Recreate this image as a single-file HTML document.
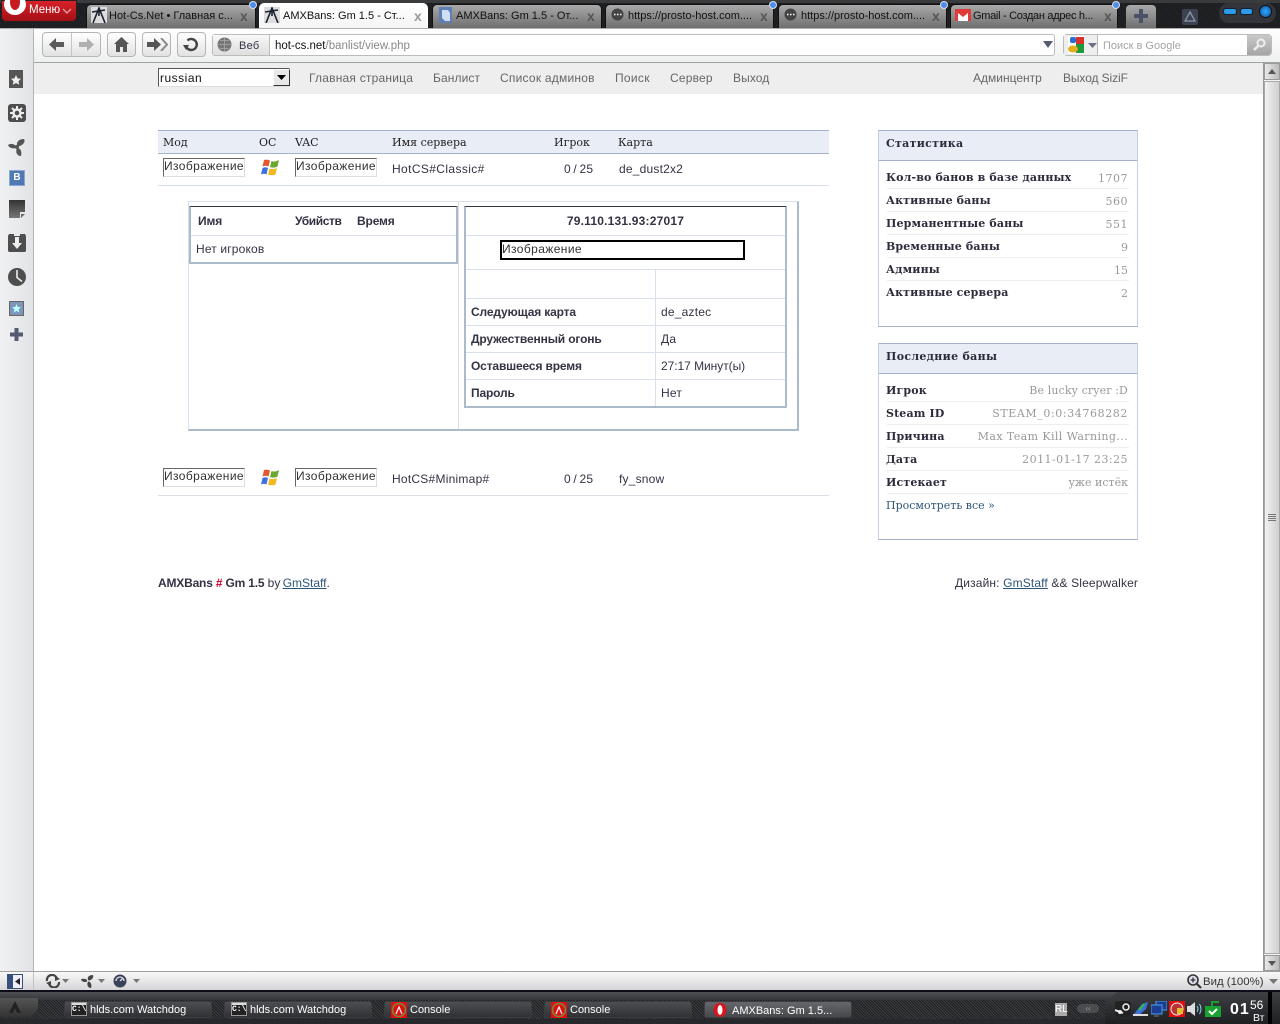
<!DOCTYPE html>
<html><head><meta charset="utf-8"><title>AMXBans</title>
<style>
*{box-sizing:border-box}
html,body{margin:0;padding:0;width:1280px;height:1024px;overflow:hidden;background:#fff}
body{position:relative;font:12px "Liberation Sans","Noto Sans CJK SC",sans-serif;color:#333344}
.a,.t,svg.i{position:absolute}
.t{white-space:nowrap;line-height:14px}
.l{letter-spacing:.2px}
.g{color:#666}
.b{font-weight:bold;letter-spacing:-.15px}
.s{font-family:"DejaVu Serif","Liberation Serif",serif;font-size:11px}
.sb{font-family:"DejaVu Serif","Liberation Serif",serif;font-size:11px;font-weight:bold;color:#2c2c3c;letter-spacing:.14px}
.v{font-family:"DejaVu Serif","Liberation Serif",serif;font-size:11px;color:#999;text-align:right;right:152px}
.tab{position:absolute;top:4px;height:24px;border-radius:5px 5px 0 0;background:linear-gradient(#a9a9a9,#6f6f6f);border:1px solid #111;border-bottom:0}
.tt{position:absolute;top:9px;white-space:nowrap;line-height:14px;font-size:11px;color:#111}
.x{position:absolute;top:9px;font:bold 14px/14px "Liberation Sans",sans-serif;color:#555}
.dot{position:absolute;top:1px;width:8px;height:8px;border-radius:50%;background:#4b8fe8;border:1px solid #dde}
.ph{position:absolute;width:82px;height:19px;background:#fff;border:1px solid;border-color:#666 #ddd #ddd #666;line-height:15px;padding-left:0;letter-spacing:.4px;color:#333}
.btn{position:absolute;top:32px;height:25px;border:1px solid #b5b5b5;border-radius:4px;background:linear-gradient(#fff,#e2e2e2)}
.ln{position:absolute;background:#d9dfec}
.tb{position:absolute;top:1001px;width:148px;height:17px;background:linear-gradient(#4c4e52,#2f3135);border-radius:3px;border:1px solid #3a3c40}
.tbt{position:absolute;top:1003px;white-space:nowrap;color:#fff;font-size:11px;line-height:14px}
</style></head><body>

<!-- top bar -->
<div class="a" style="left:0;top:0;width:1280px;height:28px;background:repeating-linear-gradient(45deg,#17181a 0 1px,#26272a 1px 2px)"></div>
<div class="a" style="left:0;top:0;width:1280px;height:3px;background:#3a3b3d"></div>
<div class="a" style="left:1px;top:0;width:76px;height:22px;background:linear-gradient(#d8222a,#a30f16);border:1px solid #222;border-radius:0 0 5px 5px"></div>
<div class="a" style="left:4px;top:-6px;width:22px;height:21px;border-radius:50%;background:#fff;"></div>
<div class="a" style="left:10px;top:-6px;width:10px;height:16px;border-radius:50%;background:#c81a22"></div>
<div class="t" style="left:29px;top:3px;color:#fff;font-size:11.5px">Меню</div>
<svg class="i" style="left:62px;top:8px" width="10" height="6"><path d="M1 1L5 5L9 1" fill="none" stroke="#e8a0a0" stroke-width="1.3"/></svg>

<div class="tab" style="left:86px;width:170px"></div>
<div class="tab" style="left:259px;width:169px;top:3px;height:26px;background:linear-gradient(#fff,#f4f4f4);border-color:#fff"></div>
<div class="tab" style="left:432px;width:170px"></div>
<div class="tab" style="left:605px;width:169px"></div>
<div class="tab" style="left:778px;width:169px"></div>
<div class="tab" style="left:950px;width:168px"></div>
<div class="tab" style="left:1125px;width:32px;border-color:#222"></div>

<svg class="i" style="left:91px;top:7px" width="16" height="16"><rect width="16" height="16" fill="#ddd"/><path d="M2 16L8 1L14 16M8 1L8 9M1 5L14 3" fill="none" stroke="#1a2230" stroke-width="1.6"/></svg>
<svg class="i" style="left:264px;top:7px" width="16" height="16"><rect width="16" height="16" fill="#ddd"/><path d="M2 16L8 1L14 16M8 1L8 9M1 5L14 3" fill="none" stroke="#1a2230" stroke-width="1.6"/></svg>
<svg class="i" style="left:438px;top:7px" width="16" height="16"><rect x="1" width="13" height="16" fill="#5d7fb5"/><path d="M4 3h6l2 3v8H7L4 11z" fill="#cfe0f5"/></svg>
<svg class="i" style="left:611px;top:8px" width="13" height="13"><circle cx="6.5" cy="6.5" r="6" fill="#444"/><path d="M3 6.5h1.5M6 6.5h1.5M9 6.5h1.5" stroke="#fff" stroke-width="1.5"/></svg>
<svg class="i" style="left:784px;top:8px" width="13" height="13"><circle cx="6.5" cy="6.5" r="6" fill="#444"/><path d="M3 6.5h1.5M6 6.5h1.5M9 6.5h1.5" stroke="#fff" stroke-width="1.5"/></svg>
<svg class="i" style="left:955px;top:9px" width="16" height="12"><rect width="16" height="12" fill="#fff"/><path d="M0 0h16v12h-3V4L8 8 3 4v8H0z" fill="#e03a3a"/></svg>

<div class="tt" style="left:109px">Hot-Cs.Net • Главная с...</div>
<div class="tt" style="left:283px;top:9px">AMXBans: Gm 1.5 - Ст...</div>
<div class="tt" style="left:456px">AMXBans: Gm 1.5 - От...</div>
<div class="tt" style="left:628px">https://prosto-host.com....</div>
<div class="tt" style="left:801px">https://prosto-host.com....</div>
<div class="tt" style="left:973px;letter-spacing:-.3px">Gmail - Создан адрес h...</div>
<div class="x" style="left:240px">x</div><div class="x" style="left:414px;color:#999">x</div><div class="x" style="left:587px">x</div><div class="x" style="left:760px">x</div><div class="x" style="left:932px">x</div><div class="x" style="left:1104px">x</div>
<div class="dot" style="left:249px"></div><div class="dot" style="left:769px"></div><div class="dot" style="left:940px"></div><div class="dot" style="left:1112px"></div>
<svg class="i" style="left:1134px;top:9px" width="14" height="14"><path d="M5 0h4v5h5v4H9v5H5V9H0V5h5z" fill="#4a5268"/></svg>
<div class="a" style="left:1182px;top:9px;width:16px;height:16px;background:#3c4250;border-radius:2px"></div>
<svg class="i" style="left:1184px;top:11px" width="12" height="12"><path d="M6 1L11 10H1z" fill="none" stroke="#8b95aa" stroke-width="1.3"/></svg>
<div class="a" style="left:1219px;top:3px;width:57px;height:20px;background:#33353a;border-radius:10px"></div>
<div class="a" style="left:1223px;top:8px;width:14px;height:7px;background:#2d9be8;border-radius:3px;border:1px solid #123"></div>
<div class="a" style="left:1240px;top:8px;width:13px;height:7px;background:#2d9be8;border-radius:3px;border:1px solid #123"></div>
<div class="a" style="left:1259px;top:5px;width:13px;height:13px;background:radial-gradient(circle,#2fa8ff,#0a4f9a);border-radius:50%;border:1px solid #111"></div>

<!-- left panel -->
<div class="a" style="left:0;top:28px;width:33px;height:944px;background:linear-gradient(90deg,#f0f1f3,#e2e3e6)"></div>
<div class="a" style="left:33px;top:28px;width:1px;height:944px;background:#b4b4b4"></div>

<!-- toolbar -->
<div class="a" style="left:34px;top:28px;width:1246px;height:34px;background:linear-gradient(#fff,#eef0f0)"></div>
<div class="a" style="left:34px;top:62px;width:1246px;height:1px;background:#a2a2a2"></div>
<div class="a" style="left:0;top:28px;width:1280px;height:1px;background:#b0b0b0"></div>

<div class="btn" style="left:42px;width:59px"></div><div class="a" style="left:71px;top:33px;width:1px;height:23px;background:#c5c5c5"></div>
<svg class="i" style="left:49px;top:38px" width="15" height="13"><path d="M7 0V4H15V9H7V13L0 6.5z" fill="#5a5a5a"/></svg>
<svg class="i" style="left:79px;top:38px" width="15" height="13"><path d="M8 0V4H0V9H8V13L15 6.5z" fill="#b0b0b0"/></svg>
<div class="btn" style="left:107px;width:29px"></div>
<svg class="i" style="left:114px;top:37px" width="15" height="15"><path d="M7.5 0L15 7H13V15H9V10H6V15H2V7H0z" fill="#555"/></svg>
<div class="btn" style="left:142px;width:29px"></div>
<svg class="i" style="left:147px;top:38px" width="21" height="13"><path d="M7 0V4H0V9H7V13L14 6.5z" fill="#555"/><path d="M14 0L20 6.5L14 13" fill="none" stroke="#888" stroke-width="2"/></svg>
<div class="btn" style="left:177px;width:29px"></div>
<svg class="i" style="left:183px;top:37px" width="16" height="15"><path d="M3 9A5.5 5.5 0 1 0 4.5 3.5" fill="none" stroke="#444" stroke-width="2.4"/><path d="M0 8h6l-3 5z" fill="#444"/></svg>

<div class="a" style="left:212px;top:34px;width:843px;height:22px;background:#fff;border:1px solid #bcbcbc;border-radius:3px"></div>
<div class="a" style="left:213px;top:35px;width:57px;height:20px;background:linear-gradient(#f8f8f8,#dedede);border-right:1px solid #bbb"></div>
<svg class="i" style="left:217px;top:37px" width="16" height="15"><circle cx="7.5" cy="7.5" r="7" fill="#777"/><path d="M1 7.5h13M7.5 1v13M3 3.5h9M3 11.5h9" stroke="#aaa" stroke-width=".8"/></svg>
<div class="t" style="left:239px;top:39px;font-size:11px;letter-spacing:.3px">Веб</div>
<div class="t" style="left:275px;top:39px;font-size:11.5px;color:#111">hot-cs.net<span style="color:#888">/banlist/view.php</span></div>
<svg class="i" style="left:1043px;top:41px" width="10" height="7"><path d="M0 0H10L5 7z" fill="#555c72"/></svg>

<div class="a" style="left:1063px;top:34px;width:209px;height:22px;background:#fff;border:1px solid #bcbcbc;border-radius:4px"></div>
<div class="a" style="left:1064px;top:35px;width:34px;height:20px;background:#eee;border-right:1px solid #bbb"></div>
<svg class="i" style="left:1068px;top:36px" width="16" height="18"><rect width="16" height="18" fill="#fff"/><rect x="2" y="1" width="6" height="6" rx="2" fill="#2a6dd8"/><rect x="8" y="1" width="8" height="8" fill="#d8322a"/><rect x="8" y="8" width="8" height="9" fill="#1f9a3a"/><ellipse cx="5" cy="13" rx="5" ry="3.5" fill="#e5ae1c"/></svg>
<svg class="i" style="left:1088px;top:43px" width="9" height="5"><path d="M0 0H9L4.5 5z" fill="#6a7186"/></svg>
<div class="t" style="left:1103px;top:39px;font-size:11px;color:#a5a5a5">Поиск в Google</div>
<div class="a" style="left:1247px;top:35px;width:24px;height:20px;background:linear-gradient(#c8c8c8,#a5a5a5);border-radius:0 3px 3px 0"></div>
<svg class="i" style="left:1253px;top:38px" width="13" height="14"><circle cx="8" cy="5" r="3.5" fill="none" stroke="#eee" stroke-width="2"/><path d="M5 8L1 12" stroke="#eee" stroke-width="2.4"/></svg>

<!-- sidebar icons -->
<svg class="i" style="left:9px;top:70px" width="15" height="18"><rect width="14" height="18" fill="#555"/><path d="M7 5l1.6 3.4 3.4.4-2.5 2.4.7 3.5L7 13l-3.2 1.7.7-3.5L2 8.8l3.4-.4z" fill="#eee"/></svg>
<svg class="i" style="left:8px;top:104px" width="18" height="18"><rect width="18" height="18" rx="3" fill="#4e4e4e"/><circle cx="9" cy="9" r="3.5" fill="none" stroke="#eee" stroke-width="2.4"/><path d="M9 2v3M9 13v3M2 9h3M13 9h3M4 4l2 2M12 12l2 2M14 4l-2 2M4 14l2-2" stroke="#eee" stroke-width="2"/></svg>
<svg class="i" style="left:8px;top:138px" width="18" height="18"><path d="M9 8C8 4 11 1 16 1C18 4 14 8 10 8.500Z" fill="#555"/><path d="M8 8C6 6 3 5 0 7C1 10 5 11 8 10Z" fill="#555"/><path d="M10 10C13 11 14 14 13 18C9 18 7 14 9 10Z" fill="#555"/><circle cx="9" cy="9" r="2" fill="#555"/></svg>
<div class="a" style="left:9px;top:170px;width:16px;height:16px;background:#4f79b5;border:1px solid #8aa7cf;color:#fff;font:bold 10px/14px 'Liberation Sans',sans-serif;text-align:center">В</div>
<svg class="i" style="left:9px;top:200px" width="16" height="18"><defs><linearGradient id="n" x1="0" y1="0" x2="0" y2="1"><stop offset="0" stop-color="#333"/><stop offset="1" stop-color="#777"/></linearGradient></defs><path d="M0 0H16V12L11 12V18H0Z" fill="url(#n)"/><path d="M12 14H16L12 18Z" fill="#666"/></svg>
<svg class="i" style="left:8px;top:234px" width="18" height="18"><path d="M1 0H6V2H12V0H17L18 2V17L17 18H1L0 17V2Z" fill="#4e4e4e"/><path d="M7 3H11V9H14L9 15L4 9H7Z" fill="#eee"/></svg>
<svg class="i" style="left:8px;top:268px" width="18" height="18"><circle cx="9" cy="9" r="9" fill="#4e4e4e"/><path d="M9 2V9.5L14 13.5" fill="none" stroke="#eee" stroke-width="1.6"/></svg>
<svg class="i" style="left:9px;top:301px" width="16" height="16"><rect x=".5" y=".5" width="14" height="14" fill="#7d95b8" stroke="#666"/><path d="M7.5 3l1.3 3 3.2.3-2.4 2.1.7 3.1-2.8-1.6-2.8 1.6.7-3.1-2.4-2.1 3.2-.3z" fill="#bff"/></svg>
<svg class="i" style="left:10px;top:328px" width="13" height="13"><path d="M4.5 0h4v4.500H13v4H8.500V13h-4V8.500H0v-4h4.500z" fill="#555a70"/></svg>

<!-- page nav -->
<div class="a" style="left:34px;top:63px;width:1229px;height:31px;background:#eee"></div>
<div class="a" style="left:158px;top:68px;width:132px;height:19px;background:#fff;border:1px solid;border-color:#555 #ddd #ddd #555"></div>
<div class="a" style="left:273px;top:69px;width:17px;height:17px;background:#e8e8e8;border:1px solid;border-color:#fff #333 #333 #fff"></div>
<svg class="i" style="left:277px;top:75px" width="9" height="5"><path d="M0 0H9L4.500 5z" fill="#000"/></svg>
<div class="t" style="left:160px;top:71px;color:#111;letter-spacing:.5px">russian</div>
<div class="t g" style="left:309px;top:71px;letter-spacing:.21px">Главная страница</div>
<div class="t g" style="left:433px;top:71px;letter-spacing:.1px">Банлист</div>
<div class="t g" style="left:500px;top:71px;letter-spacing:.23px">Список админов</div>
<div class="t g" style="left:615px;top:71px;letter-spacing:.3px">Поиск</div>
<div class="t g" style="left:670px;top:71px;letter-spacing:.2px">Сервер</div>
<div class="t g" style="left:733px;top:71px;letter-spacing:.1px">Выход</div>
<div class="t g" style="left:973px;top:71px">Админцентр</div>
<div class="t g" style="left:1063px;top:71px;letter-spacing:-.1px">Выход SiziF</div>

<!-- main table -->
<div class="a" style="left:158px;top:130px;width:671px;height:24px;background:#e9edf5;border-top:1px solid #a3b1cf;border-bottom:1px solid #a3b1cf"></div>
<div class="t s" style="left:163px;top:136px;color:#222">Мод</div>
<div class="t s" style="left:259px;top:136px;color:#222">ОС</div>
<div class="t s" style="left:295px;top:136px;color:#222">VAC</div>
<div class="t s" style="left:392px;top:136px;color:#222">Имя сервера</div>
<div class="t s" style="left:554px;top:136px;color:#222">Игрок</div>
<div class="t s" style="left:618px;top:136px;color:#222">Карта</div>

<div class="ph" style="left:163px;top:158px">Изображение</div>
<svg class="i" style="left:261px;top:159px" width="18" height="17"><path d="M3 1Q6 0 9 1.500L7.500 7.500Q4.500 6 1.500 7.500z" fill="#e2582a"/><path d="M10.500 2Q14 3.500 18 1L16.500 7.500Q13 9.500 9 8z" fill="#6aa82f"/><path d="M1.500 9Q4.500 7.500 7 9L5.500 15.500Q3 14 0 15.500z" fill="#3d6fe0"/><path d="M8.500 9.500Q12 11 16 9L14.500 15.500Q11 17 7 15.500z" fill="#f1b81f"/></svg>
<div class="ph" style="left:295px;top:158px">Изображение</div>
<div class="t" style="left:392px;top:162px;letter-spacing:.38px">HotCS#Classic#</div>
<div class="t" style="left:564px;top:162px;word-spacing:-1px;letter-spacing:.2px">0 / 25</div>
<div class="t l" style="left:619px;top:162px">de_dust2x2</div>
<div class="ln" style="left:158px;top:185px;width:671px;height:1px"></div>

<!-- detail box -->
<div class="a" style="left:188px;top:201px;width:611px;height:230px;border:1px solid #d9dfec;border-right:2px solid #aabbcc;border-bottom:2px solid #aabbcc"></div>
<div class="ln" style="left:458px;top:202px;width:1px;height:227px"></div>

<div class="a" style="left:189px;top:206px;width:269px;height:58px;border:2px solid #aabbcc;border-top:1px solid #333344"></div>
<div class="ln" style="left:191px;top:235px;width:265px;height:1px"></div>
<div class="t b" style="left:198px;top:214px">Имя</div>
<div class="t b" style="left:295px;top:214px;letter-spacing:-.4px">Убийств</div>
<div class="t b" style="left:357px;top:214px">Время</div>
<div class="t" style="left:196px;top:242px;letter-spacing:.16px">Нет игроков</div>

<div class="a" style="left:464px;top:206px;width:323px;height:202px;border:2px solid #aabbcc;border-top:1px solid #333344"></div>
<div class="ln" style="left:466px;top:235px;width:319px;height:1px"></div>
<div class="ln" style="left:466px;top:269px;width:319px;height:1px"></div>
<div class="ln" style="left:466px;top:298px;width:319px;height:1px"></div>
<div class="ln" style="left:466px;top:325px;width:319px;height:1px"></div>
<div class="ln" style="left:466px;top:352px;width:319px;height:1px"></div>
<div class="ln" style="left:466px;top:379px;width:319px;height:1px"></div>
<div class="ln" style="left:655px;top:269px;width:1px;height:137px"></div>
<div class="t b" style="left:466px;top:214px;width:319px;text-align:center;letter-spacing:.2px">79.110.131.93:27017</div>
<div class="a" style="left:500px;top:240px;width:245px;height:20px;border:2px solid #000;background:#fff;line-height:14px;padding-left:0;letter-spacing:.4px;color:#333">Изображение</div>
<div class="t b" style="left:471px;top:305px">Следующая карта</div>
<div class="t l" style="left:661px;top:305px">de_aztec</div>
<div class="t b" style="left:471px;top:332px">Дружественный огонь</div>
<div class="t l" style="left:661px;top:332px">Да</div>
<div class="t b" style="left:471px;top:359px">Оставшееся время</div>
<div class="t" style="left:661px;top:359px;letter-spacing:-.05px">27:17 Минут(ы)</div>
<div class="t b" style="left:471px;top:386px">Пароль</div>
<div class="t l" style="left:661px;top:386px">Нет</div>

<!-- row 2 -->
<div class="ph" style="left:163px;top:468px">Изображение</div>
<svg class="i" style="left:261px;top:469px" width="18" height="17"><path d="M3 1Q6 0 9 1.500L7.500 7.500Q4.500 6 1.500 7.500z" fill="#e2582a"/><path d="M10.500 2Q14 3.500 18 1L16.500 7.500Q13 9.500 9 8z" fill="#6aa82f"/><path d="M1.500 9Q4.500 7.500 7 9L5.500 15.500Q3 14 0 15.500z" fill="#3d6fe0"/><path d="M8.500 9.500Q12 11 16 9L14.500 15.500Q11 17 7 15.500z" fill="#f1b81f"/></svg>
<div class="ph" style="left:295px;top:468px">Изображение</div>
<div class="t" style="left:392px;top:472px;letter-spacing:.24px">HotCS#Minimap#</div>
<div class="t" style="left:564px;top:472px;word-spacing:-1px;letter-spacing:.2px">0 / 25</div>
<div class="t l" style="left:619px;top:472px">fy_snow</div>
<div class="a" style="left:158px;top:495px;width:671px;height:1px;background:#dcdee6"></div>

<!-- stats -->
<div class="a" style="left:878px;top:130px;width:260px;height:197px;border:1px solid #c4cfe3;border-top:1px solid #a3b1cf;border-bottom:1px solid #a3b1cf"></div>
<div class="a" style="left:879px;top:131px;width:258px;height:30px;background:#e9edf5;border-bottom:1px solid #a3b1cf"></div>
<div class="t sb" style="left:886px;top:137px;letter-spacing:.3px">Статистика</div>
<div class="t sb" style="left:886px;top:171px">Кол-во банов в базе данных</div><div class="t v" style="top:172px;letter-spacing:.5px">1707</div>
<div class="t sb" style="left:886px;top:194px">Активные баны</div><div class="t v" style="top:195px;letter-spacing:.5px">560</div>
<div class="t sb" style="left:886px;top:217px">Перманентные баны</div><div class="t v" style="top:218px;letter-spacing:.5px">551</div>
<div class="t sb" style="left:886px;top:240px">Временные баны</div><div class="t v" style="top:241px">9</div>
<div class="t sb" style="left:886px;top:263px">Админы</div><div class="t v" style="top:264px">15</div>
<div class="t sb" style="left:886px;top:286px">Активные сервера</div><div class="t v" style="top:287px">2</div>
<div class="a" style="left:887px;top:188px;width:242px;height:1px;background:#eee"></div>
<div class="a" style="left:887px;top:211px;width:242px;height:1px;background:#eee"></div>
<div class="a" style="left:887px;top:234px;width:242px;height:1px;background:#eee"></div>
<div class="a" style="left:887px;top:257px;width:242px;height:1px;background:#eee"></div>
<div class="a" style="left:887px;top:280px;width:242px;height:1px;background:#eee"></div>

<!-- last bans -->
<div class="a" style="left:878px;top:343px;width:260px;height:197px;border:1px solid #c4cfe3;border-top:1px solid #a3b1cf;border-bottom:1px solid #a3b1cf"></div>
<div class="a" style="left:879px;top:344px;width:258px;height:30px;background:#e9edf5;border-bottom:1px solid #a3b1cf"></div>
<div class="t sb" style="left:886px;top:350px;letter-spacing:.3px">Последние баны</div>
<div class="t sb" style="left:886px;top:384px">Игрок</div><div class="t v" style="top:384px;letter-spacing:.12px">Be lucky cryer :D</div>
<div class="t sb" style="left:886px;top:407px">Steam ID</div><div class="t v" style="top:407px;letter-spacing:.6px">STEAM_0:0:34768282</div>
<div class="t sb" style="left:886px;top:430px">Причина</div><div class="t v" style="top:430px;letter-spacing:.4px">Max Team Kill Warning...</div>
<div class="t sb" style="left:886px;top:453px">Дата</div><div class="t v" style="top:453px;letter-spacing:.45px">2011-01-17 23:25</div>
<div class="t sb" style="left:886px;top:476px">Истекает</div><div class="t v" style="top:476px">уже истёк</div>
<div class="t s" style="left:886px;top:499px;color:#2e5478">Просмотреть все »</div>
<div class="a" style="left:887px;top:401px;width:242px;height:1px;background:#eee"></div>
<div class="a" style="left:887px;top:424px;width:242px;height:1px;background:#eee"></div>
<div class="a" style="left:887px;top:447px;width:242px;height:1px;background:#eee"></div>
<div class="a" style="left:887px;top:470px;width:242px;height:1px;background:#eee"></div>
<div class="a" style="left:887px;top:493px;width:242px;height:1px;background:#eee"></div>

<!-- footer -->
<div class="t" style="left:158px;top:576px"><span class="b" style="letter-spacing:-.19px">AMXBans <span style="color:#d00030">#</span> Gm 1.5</span> by <span style="color:#2e5478;text-decoration:underline;margin-left:-1px">GmStaff</span>.</div>
<div class="t" style="left:955px;top:576px;letter-spacing:.14px">Дизайн: <span style="color:#2e5478;text-decoration:underline">GmStaff</span> &amp;&amp; Sleepwalker</div>

<!-- scrollbar -->
<div class="a" style="left:1263px;top:63px;width:17px;height:908px;background:#f2f2f2;border-left:1px solid #999"></div>
<div class="a" style="left:1264px;top:63px;width:16px;height:17px;background:linear-gradient(90deg,#e8e8e8,#bbb);border:1px solid #999"></div>
<div class="a" style="left:1264px;top:81px;width:16px;height:873px;background:linear-gradient(90deg,#f2f2f2,#cfcfcf);border:1px solid #a8a8a8"></div>
<div class="a" style="left:1268px;top:514px;width:8px;height:7px;background:repeating-linear-gradient(#777 0 1px,transparent 1px 2px)"></div>
<div class="a" style="left:1264px;top:955px;width:16px;height:16px;background:linear-gradient(90deg,#e8e8e8,#bbb);border:1px solid #999"></div>
<svg class="i" style="left:1268px;top:69px" width="8" height="5"><path d="M0 5L4 0L8 5z" fill="#555"/></svg>
<svg class="i" style="left:1268px;top:961px" width="8" height="5"><path d="M0 0L4 5L8 0z" fill="#555"/></svg>

<!-- status bar -->
<div class="a" style="left:0;top:971px;width:1280px;height:1px;background:#a0a0a0"></div>
<div class="a" style="left:0;top:972px;width:1280px;height:18px;background:linear-gradient(#f8f8f8,#d6d6d8)"></div>
<div class="a" style="left:33px;top:972px;width:1px;height:18px;background:#c0c0c0"></div>
<div class="a" style="left:7px;top:974px;width:16px;height:15px;background:linear-gradient(90deg,#35507c 0 5px,#eef 5px);border:1px solid #3a4f72"></div>
<svg class="i" style="left:15px;top:978px" width="5" height="7"><path d="M5 0V7L0 3.500z" fill="#222"/></svg>
<svg class="i" style="left:45px;top:974px" width="24" height="14"><path d="M2 7A5 5 0 0 1 12 5M14 8A5 5 0 0 1 4 9" fill="none" stroke="#444" stroke-width="2.200"/><path d="M10 2L15 5L10 7ZM6 12L1 9L6 7Z" fill="#444"/><path d="M17 5h7l-3.500 4z" fill="#777"/></svg>
<svg class="i" style="left:81px;top:974px" width="24" height="14"><path d="M7 6C6 3 8 1 12 1C13 3 11 6 8 6.500Z" fill="#444"/><path d="M6 6C5 5 2 4 0 5.500C1 8 4 8.500 6 7.500Z" fill="#444"/><path d="M7.500 7.500C10 8 11 11 10 14C7 14 5.500 11 7 7.500Z" fill="#444"/><path d="M17 5h7l-3.500 4z" fill="#777"/></svg>
<svg class="i" style="left:113px;top:974px" width="28" height="14"><circle cx="7" cy="7" r="6.500" fill="#3b4256"/><path d="M3 7a4 4 0 0 1 8 0M7 7L10 4" fill="none" stroke="#dde" stroke-width="1.300"/><path d="M20 5h7l-3.500 4z" fill="#777"/></svg>
<svg class="i" style="left:1187px;top:974px" width="15" height="15"><circle cx="6" cy="6" r="5" fill="#dde" stroke="#333" stroke-width="1.600"/><path d="M3.500 6h5M6 3.500v5" stroke="#333" stroke-width="1.300"/><path d="M10 10L14 14" stroke="#333" stroke-width="2.200"/></svg>
<div class="t" style="left:1203px;top:975px;font-size:11.4px;color:#333">Вид (100%)</div>
<svg class="i" style="left:1269px;top:979px" width="9" height="5"><path d="M0 0H9L4.500 5z" fill="#777"/></svg>

<!-- taskbar -->
<div class="a" style="left:0;top:990px;width:1280px;height:34px;background:repeating-linear-gradient(45deg,#1f2022 0 1px,#3c3d40 1px 2px)"></div>
<div class="a" style="left:0;top:990px;width:1280px;height:2px;background:#0c0d18"></div>
<div class="a" style="left:0;top:992px;width:1280px;height:8px;background:linear-gradient(#4e5053,#333538)"></div>
<div class="a" style="left:0;top:1019px;width:1280px;height:5px;background:#27282b"></div>
<div class="a" style="left:0;top:998px;width:38px;height:19px;background:linear-gradient(#555,#333);border-radius:0 0 12px 0"></div>
<svg class="i" style="left:8px;top:1000px" width="14" height="14"><path d="M7 1L1 13H5L7 8L9 13H13Z" fill="#222"/></svg>
<div class="tb" style="left:64px"></div><div class="tb" style="left:224px"></div><div class="tb" style="left:384px"></div><div class="tb" style="left:544px"></div><div class="tb" style="left:704px;background:linear-gradient(#65676b,#46484c)"></div>
<div class="a" style="left:71px;top:1002px;width:16px;height:14px;background:#ddd;border:1px solid #999"></div><div class="a" style="left:72px;top:1005px;width:14px;height:10px;background:#222;color:#fff;font:bold 8px/10px 'Liberation Mono',monospace">C:\</div>
<div class="a" style="left:231px;top:1002px;width:16px;height:14px;background:#ddd;border:1px solid #999"></div><div class="a" style="left:232px;top:1005px;width:14px;height:10px;background:#222;color:#fff;font:bold 8px/10px 'Liberation Mono',monospace">C:\</div>
<svg class="i" style="left:391px;top:1002px" width="16" height="16"><rect width="16" height="16" fill="#e01010"/><circle cx="8" cy="8" r="6.500" fill="none" stroke="#7a8a3a" stroke-width="1.500"/><path d="M5 12L8 5L11 12" fill="none" stroke="#eee" stroke-width="1.300"/></svg>
<svg class="i" style="left:551px;top:1002px" width="16" height="16"><rect width="16" height="16" fill="#e01010"/><circle cx="8" cy="8" r="6.500" fill="none" stroke="#7a8a3a" stroke-width="1.500"/><path d="M5 12L8 5L11 12" fill="none" stroke="#eee" stroke-width="1.300"/></svg>
<svg class="i" style="left:713px;top:1003px" width="14" height="14"><ellipse cx="7" cy="7" rx="6.500" ry="7" fill="#d8141c"/><ellipse cx="7" cy="7" rx="2.500" ry="5" fill="#fff"/></svg>
<div class="tbt" style="left:90px">hlds.com Watchdog</div>
<div class="tbt" style="left:250px">hlds.com Watchdog</div>
<div class="tbt" style="left:410px">Console</div>
<div class="tbt" style="left:570px">Console</div>
<div class="tbt" style="left:732px;top:1004px">AMXBans: Gm 1.5...</div>

<div class="a" style="left:1105px;top:992px;width:175px;height:32px;background:linear-gradient(#3e4043,#1f2022);clip-path:polygon(12px 0,100% 0,100% 100%,0 100%,0 10px)"></div>
<div class="a" style="left:1055px;top:1003px;width:12px;height:13px;background:#aaa;color:#fff;font:10px/13px 'Liberation Sans',sans-serif;text-align:center">RL</div>
<div class="a" style="left:1077px;top:1004px;width:22px;height:9px;background:#4a4c50;border-radius:5px;color:#999;font:8px/9px 'Liberation Sans',sans-serif;text-align:center">‹‹</div>
<svg class="i" style="left:1115px;top:1001px" width="16" height="16"><rect width="16" height="16" rx="3" fill="#222"/><circle cx="11" cy="6" r="3" fill="none" stroke="#eee" stroke-width="1.500"/><path d="M0 9L8 12" stroke="#eee" stroke-width="2"/><circle cx="5" cy="11" r="2" fill="#eee"/></svg>
<svg class="i" style="left:1133px;top:1001px" width="16" height="16"><path d="M1 13L9 3L15 1L13 8L5 15Z" fill="#3a72d8"/><path d="M6 9L11 3" stroke="#2fbf3f" stroke-width="2"/><path d="M0 14H15" stroke="#ddd" stroke-width="2"/></svg>
<svg class="i" style="left:1151px;top:1001px" width="16" height="17"><rect x="5" y="0" width="11" height="9" fill="#1c3e90" stroke="#4aa0f0"/><rect x="0" y="4" width="11" height="9" fill="#1c3e90" stroke="#4aa0f0"/><path d="M3 15H8" stroke="#777"/></svg>
<svg class="i" style="left:1169px;top:1001px" width="16" height="16"><rect width="16" height="16" fill="#e01010"/><circle cx="8" cy="8" r="6" fill="#b33" stroke="#eee"/><rect x="8" y="7" width="6" height="6" fill="#e0c030"/></svg>
<svg class="i" style="left:1187px;top:1002px" width="16" height="14"><path d="M0 4H3L8 0V14L3 10H0Z" fill="#ddd"/><path d="M10 4Q12 7 10 10M12.500 2Q15.500 7 12.500 12" fill="none" stroke="#8dd" stroke-width="1"/></svg>
<svg class="i" style="left:1205px;top:1001px" width="16" height="16"><path d="M0 5H16V16H0Z" fill="#18a030"/><path d="M7 5V1H14" fill="none" stroke="#18a030" stroke-width="2"/><path d="M4 10L7 13L12 8" fill="none" stroke="#fff" stroke-width="2"/></svg>
<div class="t b" style="left:1230px;top:1001px;color:#fff;font-size:16px;line-height:18px;letter-spacing:1px">01</div>
<div class="t" style="left:1250px;top:999px;color:#fff;font-size:12px;line-height:13px">56</div>
<div class="t" style="left:1253px;top:1012px;color:#fff;font-size:10.500px;line-height:12px">Вт</div>
<div class="a" style="left:1268px;top:992px;width:4px;height:32px;background:#000"></div>
</body></html>
